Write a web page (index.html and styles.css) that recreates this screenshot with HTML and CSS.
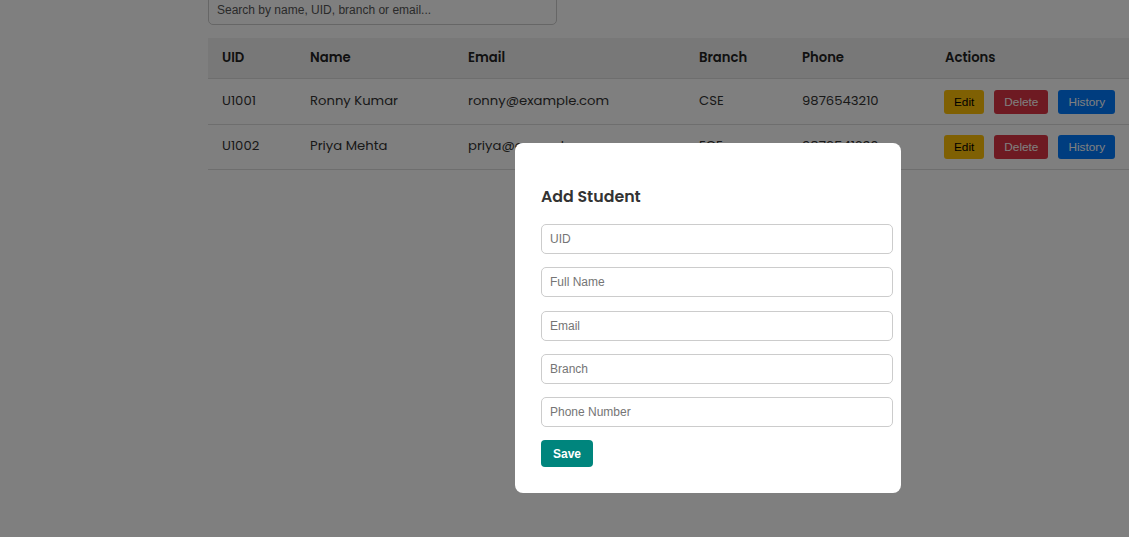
FILE: index.html
```html
<!DOCTYPE html>
<html>
<head>
<meta charset="utf-8">
<link rel="stylesheet" href="styles.css">
</head>
<body>
<main class="content">
  <input class="search" type="text" placeholder="Search by name, UID, branch or email...">
  <table class="students">
    <thead>
      <tr>
        <th class="c-uid">UID</th>
        <th class="c-name">Name</th>
        <th class="c-email">Email</th>
        <th class="c-branch">Branch</th>
        <th class="c-phone">Phone</th>
        <th class="c-actions">Actions</th>
      </tr>
    </thead>
    <tbody>
      <tr>
        <td>U1001</td>
        <td>Ronny Kumar</td>
        <td>ronny@example.com</td>
        <td>CSE</td>
        <td>9876543210</td>
        <td class="actions"><button class="btn btn-edit">Edit</button><button class="btn btn-delete">Delete</button><button class="btn btn-history">History</button></td>
      </tr>
      <tr>
        <td>U1002</td>
        <td>Priya Mehta</td>
        <td>priya@example.com</td>
        <td>ECE</td>
        <td>9876541230</td>
        <td class="actions"><button class="btn btn-edit">Edit</button><button class="btn btn-delete">Delete</button><button class="btn btn-history">History</button></td>
      </tr>
    </tbody>
  </table>
</main>
<div class="overlay"></div>
<div class="modal">
  <h3 class="modal-title">Add Student</h3>
  <input class="field" type="text" placeholder="UID">
  <input class="field" type="text" placeholder="Full Name">
  <input class="field" type="text" placeholder="Email">
  <input class="field" type="text" placeholder="Branch">
  <input class="field" type="text" placeholder="Phone Number">
  <button class="save">Save</button>
</div>
</body>
</html>
```
FILE: styles.css
```css
html, body {
  margin: 0;
  padding: 0;
  background: #ffffff;
  overflow: hidden;
}
body {
  font-family: "Poppins", "Inter", "Open Sans", sans-serif;
  color: #333;
}
.content {
  margin-left: 208px;
  display: flex;
  flex-direction: column;
  align-items: flex-start;
}
.search {
  box-sizing: border-box;
  width: 349px;
  height: 30px;
  margin-top: -5px;
  padding: 0 8px;
  border: 1px solid #ccc;
  border-radius: 5px;
  font-family: "Liberation Sans", Arial, sans-serif;
  font-size: 12px;
  color: #333;
  outline: none;
}
.search::placeholder { color: #555; }
.students {
  margin-top: 13px;
  width: 921px;
  border-collapse: collapse;
  font-size: 13.2px;
  table-layout: fixed;
}
.students th {
  background: #f1f1f1;
  height: 40px;
  padding: 0 0 0 14px;
  text-align: left;
  font-weight: 600;
  color: #222;
  border-bottom: 1px solid #ddd;
}
.students td {
  height: 43.5px;
  padding: 0 0 1px 14px;
  border-bottom: 1px solid #ddd;
  color: #333;
  white-space: nowrap;
}
.c-uid { width: 74px; }
.c-name { width: 144px; }
.c-email { width: 217px; }
.c-branch { width: 89px; }
.c-phone { width: 129px; }
.students td.actions {
  padding-left: 13px;
  padding-bottom: 0;
  padding-top: 1px;
}
.btn {
  height: 24px;
  border: none;
  border-radius: 3px;
  padding: 0 10px;
  margin-right: 10px;
  font-family: "Liberation Sans", Arial, sans-serif;
  font-size: 11.8px;
  vertical-align: middle;
}
.btn-edit { background: #ffc107; color: #000; }
.btn-delete { background: #dc3545; color: #fff; }
.btn-history { background: #007bff; color: #fff; }
.overlay {
  position: fixed;
  inset: 0;
  background: rgba(0, 0, 0, 0.5);
}
.modal {
  position: fixed;
  left: 515px;
  top: 143px;
  width: 334px;
  padding: 26px;
  background: #fff;
  border-radius: 8px;
}
.modal-title {
  margin: 15px 0 14px;
  font-size: 15.8px;
  line-height: 26px;
  font-weight: 600;
  color: #333;
}
.field {
  display: block;
  width: 100%;
  height: 28px;
  margin: 0 0 13.3px;
  padding: 0 8px;
  border: 1px solid #ccc;
  border-radius: 5px;
  font-family: "Liberation Sans", Arial, sans-serif;
  font-size: 12px;
  outline: none;
}
.field::placeholder { color: #757575; }
.save {
  display: block;
  width: 52px;
  height: 27px;
  border: none;
  border-radius: 4px;
  background: #00857d;
  color: #fff;
  font-family: "Liberation Sans", Arial, sans-serif;
  font-weight: bold;
  font-size: 12px;
}
```
